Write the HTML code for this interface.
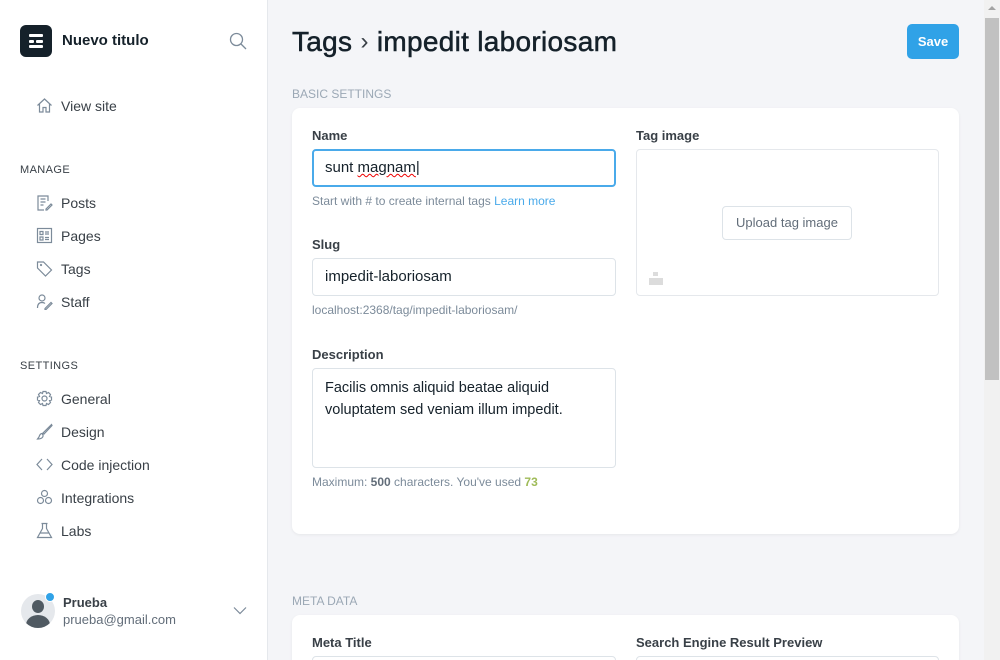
<!DOCTYPE html>
<html style="width:1000px;height:660px;overflow:hidden"><head><meta charset="utf-8"><style>
*{box-sizing:border-box;margin:0;padding:0}
body{width:1000px;height:660px;overflow:hidden;font-family:"Liberation Sans",sans-serif;background:#f4f5f8;position:relative;color:#15212a}
.side{position:absolute;left:0;top:0;width:268px;height:660px;background:#fff;border-right:1px solid #e5e8ec}
.logo{position:absolute;left:20px;top:25px;width:32px;height:32px;background:#15212a;border-radius:6px}
.logo i{position:absolute;height:3px;background:#fff;border-radius:1px}
.title{position:absolute;left:62px;top:32px;font-weight:bold;font-size:15px;color:#15212a}
.nav{position:absolute;left:36px;font-size:14px;color:#394047;display:flex;align-items:center}
.nav svg{width:17px;height:17px;margin-right:8px;fill:none;stroke:#7c8b9a;stroke-width:1.2}
.hd{position:absolute;left:20px;font-size:11px;color:#394047;letter-spacing:.4px}
.main{position:absolute;left:268px;top:0;width:716px;height:660px;overflow:hidden}
h1{position:absolute;left:24px;top:26px;font-size:28px;font-weight:normal;color:#15212a;-webkit-text-stroke:.5px #15212a;letter-spacing:.3px}
.save{position:absolute;left:639px;top:24px;width:52px;height:35px;background:#30a2e7;border-radius:5px;color:#fff;font-size:13px;font-weight:bold;text-align:center;line-height:35px}
.sec{position:absolute;left:24px;font-size:12px;color:#9ba8b5}
.card{position:absolute;left:24px;width:667px;background:#fff;border-radius:8px;box-shadow:0 1px 3px rgba(0,0,0,.06)}
.lbl{position:absolute;font-size:13px;font-weight:bold;color:#394047}
.inp{position:absolute;border:1px solid #dde3e8;border-radius:4px;background:#fff;font-size:15px;color:#15212a;padding-left:12px}
.help{position:absolute;font-size:12px;color:#7c8b9a}
.sb{position:absolute;left:984px;top:0;width:16px;height:660px;background:#f1f1f1}
</style></head><body>
<div class="side">
<div class="logo"><i style="left:9px;top:9px;width:14px"></i><i style="left:9px;top:14.5px;width:5px"></i><i style="left:16px;top:14.5px;width:7px"></i><i style="left:9px;top:20px;width:14px"></i></div>
<div class="title">Nuevo titulo</div>
<svg style="position:absolute;left:229px;top:32px" width="18" height="18" viewBox="0 0 18 18" fill="none" stroke="#7c8b9a" stroke-width="1.3"><circle cx="7.5" cy="7.5" r="6"/><path d="M12 12l5 5"/></svg>
<div class="nav" style="top:97px"><svg viewBox="0 0 17 17"><path d="M1.5 8.5L8.5 2l7 6.5M3.5 7v8h3.5v-4.5h3V15h3.5V7"/></svg>View site</div>
<div class="hd" style="top:164px">MANAGE</div>
<div class="nav" style="top:194px"><svg viewBox="0 0 17 17"><path d="M12 7V2H2v14h6M4.5 5h5M4.5 8h5M4.5 11h3M10 15l5-5 1 1-5 5h-1z"/></svg>Posts</div>
<div class="nav" style="top:227px"><svg viewBox="0 0 17 17"><rect x="1.5" y="1.5" width="14" height="14"/><path d="M4 4.5h3v3H4zM4 10h3v3H4zM9 5h4M9 7h4M9 10.5h4M9 12.5h4"/></svg>Pages</div>
<div class="nav" style="top:260px"><svg viewBox="0 0 17 17"><path d="M1.5 2v6l8 8 6-6-8-8zM5 4.5a.5.5 0 1 0 .1 0"/></svg>Tags</div>
<div class="nav" style="top:293px"><svg viewBox="0 0 17 17"><circle cx="6" cy="5" r="3"/><path d="M1.5 15c0-4 2-5.5 4.5-5.5 1.5 0 2.5.5 3 1M9 15.5l6-6 1 1-6 6H9z"/></svg>Staff</div>
<div class="hd" style="top:360px">SETTINGS</div>
<div class="nav" style="top:390px"><svg viewBox="0 0 17 17"><circle cx="8.5" cy="8.5" r="2.5"/><path d="M7 1.5h3l.5 2 2-1 2 2-1 2 2 .5v3l-2 .5 1 2-2 2-2-1-.5 2H7l-.5-2-2 1-2-2 1-2-2-.5V7l2-.5-1-2 2-2 2 1z"/></svg>General</div>
<div class="nav" style="top:423px"><svg viewBox="0 0 17 17"><path d="M15.5 1.5L7 10l1 1 8-8.5zM6 10.5c-2 0-2.5 2-3 3.5L1.5 16c3 0 6-1 5.5-4z"/></svg>Design</div>
<div class="nav" style="top:456px"><svg viewBox="0 0 17 17"><path d="M6 3L1 8.5 6 14M11 3l5 5.5-5 5.5"/></svg>Code injection</div>
<div class="nav" style="top:489px"><svg viewBox="0 0 17 17"><circle cx="8.5" cy="4.5" r="3"/><circle cx="4.5" cy="11.5" r="3"/><circle cx="12.5" cy="11.5" r="3"/></svg>Integrations</div>
<div class="nav" style="top:522px"><svg viewBox="0 0 17 17"><path d="M5.5 1.5h6M6.5 1.5v5L1.5 15.5h14l-5-9v-5M4 11h9"/></svg>Labs</div>
<div style="position:absolute;left:21px;top:594px;width:34px;height:34px;border-radius:50%;background:#e5e8ec;overflow:hidden">
<div style="position:absolute;left:11px;top:6px;width:12px;height:13px;border-radius:50%;background:#505a62"></div>
<div style="position:absolute;left:5px;top:21px;width:24px;height:20px;border-radius:50%;background:#505a62"></div></div>
<div style="position:absolute;left:45px;top:592px;width:10px;height:10px;border-radius:50%;background:#30a2e7;border:1px solid #fff"></div>
<div style="position:absolute;left:63px;top:595px;font-size:13px;font-weight:bold;color:#394047">Prueba</div>
<div style="position:absolute;left:63px;top:612px;font-size:13px;color:#626d79">prueba@gmail.com</div>
<svg style="position:absolute;left:233px;top:606px" width="14" height="9" viewBox="0 0 14 9" fill="none" stroke="#7c8b9a" stroke-width="1.2"><path d="M1 1.5l6 6 6-6"/></svg>
</div>
<div class="main">
<h1>Tags <span style="color:#394047;font-size:24px;-webkit-text-stroke:0;position:relative;top:-2px">›</span> impedit laboriosam</h1>
<div class="save">Save</div>
<div class="sec" style="top:87px">BASIC SETTINGS</div>
<div class="card" style="top:108px;height:426px">
<div class="lbl" style="left:20px;top:20px">Name</div>
<div class="inp" style="left:20px;top:41px;width:304px;height:38px;border:2px solid #4aaaea;line-height:34px;padding-left:11px">sunt <span style="text-decoration:underline wavy #e00;text-decoration-thickness:1px">magnam</span>|</div>
<div class="help" style="left:20px;top:86px">Start with # to create internal tags <span style="color:#4aaaea">Learn more</span></div>
<div class="lbl" style="left:20px;top:129px">Slug</div>
<div class="inp" style="left:20px;top:150px;width:304px;height:38px;line-height:36px">impedit-laboriosam</div>
<div class="help" style="left:20px;top:195px">localhost:2368/tag/impedit-laboriosam/</div>
<div class="lbl" style="left:20px;top:239px">Description</div>
<div class="inp" style="left:20px;top:260px;width:304px;height:100px;padding-top:8px;line-height:22px;font-size:14.5px">Facilis omnis aliquid beatae aliquid voluptatem sed veniam illum impedit.</div>
<div class="help" style="left:20px;top:367px">Maximum: <b style="color:#626d79">500</b> characters. You've used <b style="color:#9fbb58">73</b></div>
<div class="lbl" style="left:344px;top:20px">Tag image</div>
<div style="position:absolute;left:344px;top:41px;width:303px;height:147px;border:1px solid #e5e8ec;border-radius:4px">
<div style="position:absolute;left:85px;top:56px;width:130px;height:34px;border:1px solid #dde3e8;border-radius:4px;font-size:13px;color:#626d79;text-align:center;line-height:32px">Upload tag image</div>
<div style="position:absolute;left:12px;top:128px;width:14px;height:7px;background:#dcdcdc"></div>
<div style="position:absolute;left:16px;top:122px;width:5px;height:4px;background:#dcdcdc"></div>
</div>
</div>
<div class="sec" style="top:594px">META DATA</div>
<div class="card" style="top:615px;height:80px">
<div class="lbl" style="left:20px;top:20px">Meta Title</div>
<div class="lbl" style="left:344px;top:20px">Search Engine Result Preview</div>
<div class="inp" style="left:20px;top:41px;width:304px;height:38px"></div>
<div class="inp" style="left:344px;top:41px;width:303px;height:38px"></div>
</div>
</div>
<div class="sb"><div style="position:absolute;left:1px;top:18px;width:14px;height:362px;background:#c1c1c1"></div>
<div style="position:absolute;left:4px;top:6px;border:4px solid transparent;border-bottom:4px solid #a3a3a3;border-top:0"></div></div>
</body></html>
